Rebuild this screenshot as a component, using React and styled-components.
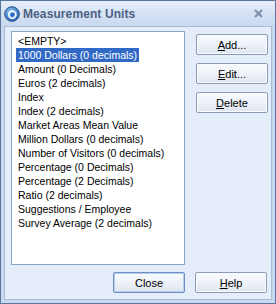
import React from 'react'
import styled, { createGlobalStyle } from 'styled-components'

const GlobalStyle = createGlobalStyle`
  html, body {
    margin: 0;
    padding: 0;
    background: #ffffff;
  }
  * {
    box-sizing: border-box;
  }
`

const Window = styled.div`
  width: 276px;
  height: 304px;
  display: flex;
  flex-direction: column;
  border: 1px solid #5a76a1;
  background: #c8d8ee;
  font-family: "Liberation Sans", Arial, sans-serif;
  font-size: 11px;
  color: #000;
`
const TitleBar = styled.div`
  height: 25px;
  flex: none;
  display: flex;
  align-items: center;
  padding: 0 12px 0 3px;
  background: linear-gradient(#e6eef9, #d4e1f3 55%, #c9d9ef);
`
const TitleText = styled.div`
  flex: 1;
  margin-left: 3px;
  font-weight: bold;
  font-size: 12px;
  color: #4d6283;
  letter-spacing: 0.1px;
`
const CloseGlyph = styled.svg`
  width: 9px;
  height: 9px;
`
const Client = styled.div`
  flex: 1;
  margin: 0 3px 3px 3px;
  border: 1px solid #a7bcd9;
  background: #e4edf9;
  display: flex;
  flex-direction: column;
  padding: 4px 3px 6px 6px;
`
const Main = styled.div`
  display: flex;
  gap: 11px;
`
const ListBox = styled.div`
  width: 174px;
  height: 234px;
  background: #fff;
  border: 1px solid #8aa4c6;
  padding: 2px 0 0 4px;
`
const Item = styled.div`
  height: 14px;
  line-height: 14px;
  font-size: 10.5px;
  white-space: nowrap;
`
const ItemText = styled.span`
  display: inline-block;
  height: 14px;
  padding: 0 2px;
  background: ${p => (p.$selected ? '#3169c6' : 'transparent')};
  color: ${p => (p.$selected ? '#fff' : '#000')};
`
const ButtonColumn = styled.div`
  display: flex;
  flex-direction: column;
  gap: 8px;
  padding-top: 3px;
`
const Button = styled.button`
  width: 72px;
  height: 21px;
  padding: 0;
  font-family: inherit;
  font-size: 11px;
  color: #000;
  border-radius: 2px;
  border: 1px solid ${p => (p.$default ? '#6d8fc2' : '#8a9bb5')};
  box-shadow: ${p => (p.$default ? 'inset 0 0 0 1px #b6cdee' : 'inset 0 0 0 1px #fbfcfe')};
  background: linear-gradient(#f8fafd, #eef2f8 50%, #dfe6f1);
  cursor: default;

  u {
    text-decoration: underline;
  }
`
const Footer = styled.div`
  display: flex;
  justify-content: flex-end;
  gap: 10px;
  margin-top: 7px;
  padding-right: 1px;
`

const units = [
  '<EMPTY>',
  '1000 Dollars (0 decimals)',
  'Amount (0 Decimals)',
  'Euros (2 decimals)',
  'Index',
  'Index (2 decimals)',
  'Market Areas Mean Value',
  'Million Dollars (0 decimals)',
  'Number of Visitors (0 decimals)',
  'Percentage (0 Decimals)',
  'Percentage (2 Decimals)',
  'Ratio (2 decimals)',
  'Suggestions / Employee',
  'Survey Average (2 decimals)',
]

const AppIcon = () => (
  <svg width="16" height="16" viewBox="0 0 16 16">
    <defs>
      <radialGradient id="ball" cx="40%" cy="35%" r="70%">
        <stop offset="0" stopColor="#8fc6f5" />
        <stop offset="1" stopColor="#1c5fb0" />
      </radialGradient>
    </defs>
    <circle cx="8" cy="8" r="7.3" fill="url(#ball)" stroke="#2b4f86" strokeWidth="1" />
    <circle cx="8.3" cy="8.6" r="3.6" fill="none" stroke="#ffffff" strokeWidth="1.6" />
    <circle cx="8.3" cy="8.6" r="1.6" fill="#1e63c0" />
  </svg>
)

export default function App() {
  return (
    <>
      <GlobalStyle />
      <Window>
        <TitleBar>
          <AppIcon />
          <TitleText>Measurement Units</TitleText>
          <CloseGlyph viewBox="0 0 9 9">
            <path d="M1 1 L8 8 M8 1 L1 8" stroke="#7d8ea8" strokeWidth="2" />
          </CloseGlyph>
        </TitleBar>
        <Client>
          <Main>
            <ListBox>
              {units.map((u, i) => (
                <Item key={u}>
                  <ItemText $selected={i === 1}>{u}</ItemText>
                </Item>
              ))}
            </ListBox>
            <ButtonColumn>
              <Button><u>A</u>dd...</Button>
              <Button><u>E</u>dit...</Button>
              <Button><u>D</u>elete</Button>
            </ButtonColumn>
          </Main>
          <Footer>
            <Button $default>Close</Button>
            <Button><u>H</u>elp</Button>
          </Footer>
        </Client>
      </Window>
    </>
  )
}
